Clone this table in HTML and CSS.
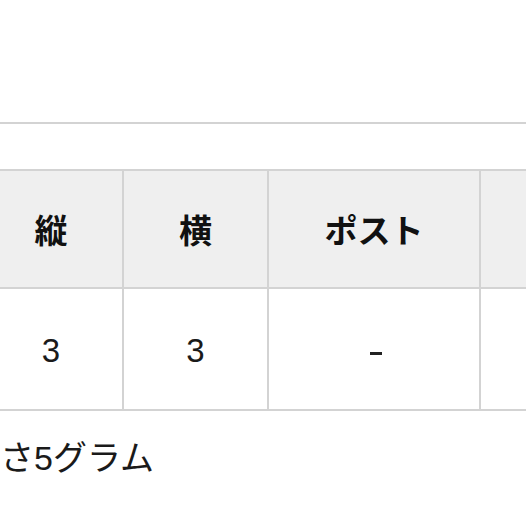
FILE: index.html
```html
<!DOCTYPE html>
<html lang="ja">
<head>
<meta charset="utf-8">
<link rel="stylesheet" href="styles.css">
</head>
<body>
<div class="page">
  <div class="rule"></div>
  <table class="spec">
    <thead>
      <tr>
        <th class="c1">縦</th>
        <th class="c2">横</th>
        <th class="c3">ポスト</th>
        <th class="c4"></th>
      </tr>
    </thead>
    <tbody>
      <tr>
        <td>3</td>
        <td>3</td>
        <td><span class="dash"></span></td>
        <td></td>
      </tr>
    </tbody>
  </table>
  <p class="note">さ5グラム</p>
</div>
</body>
</html>
```
FILE: styles.css
```css
html, body {
  margin: 0;
  padding: 0;
  background: #fff;
  overflow: hidden;
}
.page {
  width: 526px;
  height: 526px;
  overflow: hidden;
  padding-top: 122px;
  box-sizing: border-box;
  font-family: "Liberation Sans", "Noto Sans CJK JP", sans-serif;
  color: #1a1a1a;
}
.rule {
  height: 2px;
  background: #d3d3d3;
}
.spec {
  margin-top: 45px;
  margin-left: -22px;
  border-collapse: collapse;
  table-layout: fixed;
  width: 700px;
}
.spec th, .spec td {
  border: 2px solid #d3d3d3;
  text-align: center;
  vertical-align: middle;
  padding: 0;
}
.spec th {
  background: #efefef;
  height: 116px;
  font-family: "Noto Sans CJK JP", sans-serif;
  font-weight: 700;
  font-size: 33px;
  color: #111;
}
.spec td {
  height: 116px;
  padding-top: 4px;
  font-size: 33px;
  font-weight: 400;
}
.c1 { width: 142px; }
.c2 { width: 143px; }
.c3 { width: 210px; }
.c4 { width: 200px; }
.dash {
  display: inline-block;
  width: 12px;
  height: 3px;
  background: #222;
  vertical-align: middle;
  margin-left: 4px;
}
.note {
  margin: 26px 0 0 0;
  font-family: "Liberation Sans", "Noto Sans CJK JP", sans-serif;
  font-size: 34px;
  line-height: 42px;
  color: #1a1a1a;
}
```
